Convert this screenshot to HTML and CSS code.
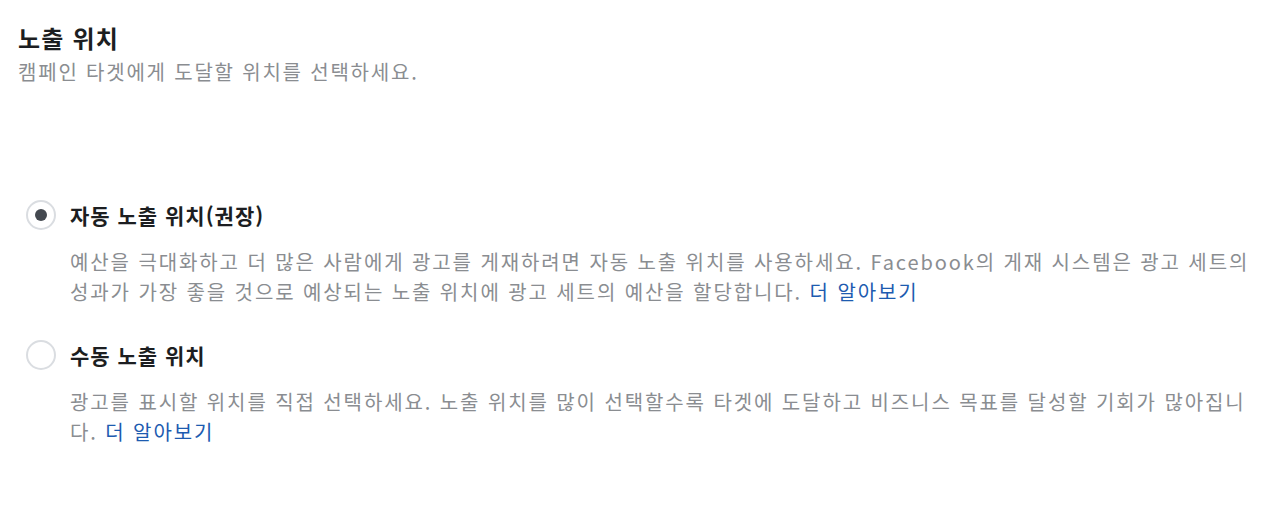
FILE: index.html
```html
<!DOCTYPE html>
<html lang="ko">
<head>
<meta charset="utf-8">
<link rel="stylesheet" href="styles.css">
</head>
<body>
<div class="page">
  <header class="head">
    <h1 class="title">노출 위치</h1>
    <p class="subtitle">캠페인 타겟에게 도달할 위치를 선택하세요.</p>
  </header>
  <div class="options">
    <div class="option">
      <div class="row">
        <span class="radio checked"><span class="dot"></span></span>
        <span class="label">자동 노출 위치(권장)</span>
      </div>
      <p class="desc">예산을 극대화하고 더 많은 사람에게 광고를 게재하려면 자동 노출 위치를 사용하세요. Facebook의 게재 시스템은 광고 세트의 성과가 가장 좋을 것으로 예상되는 노출 위치에 광고 세트의 예산을 할당합니다. <a class="link" href="#">더 알아보기</a></p>
    </div>
    <div class="option">
      <div class="row">
        <span class="radio"></span>
        <span class="label">수동 노출 위치</span>
      </div>
      <p class="desc">광고를 표시할 위치를 직접 선택하세요. 노출 위치를 많이 선택할수록 타겟에 도달하고 비즈니스 목표를 달성할 기회가 많아집니다. <a class="link" href="#">더 알아보기</a></p>
    </div>
  </div>
</div>
</body>
</html>
```
FILE: styles.css
```css
html, body {
  margin: 0;
  padding: 0;
  background: #ffffff;
}
body {
  font-family: "Noto Sans CJK KR", "Noto Sans", sans-serif;
  color: #1c1e21;
}
.page {
  width: 1262px;
  padding: 20px 0 0 18px;
}
.title {
  margin: 0;
  font-size: 24px;
  line-height: 36px;
  font-weight: 700;
  letter-spacing: 1.2px;
  color: #1c1e21;
}
.subtitle {
  margin: 0;
  font-size: 20px;
  line-height: 32px;
  letter-spacing: 1.8px;
  color: #8a8d91;
}
.options {
  padding-top: 112px;
  padding-left: 8px;
  display: flex;
  flex-direction: column;
  gap: 33px;
}
.row {
  display: flex;
  align-items: center;
  gap: 14px;
  height: 30px;
}
.radio {
  box-sizing: border-box;
  width: 30px;
  height: 30px;
  border: 2px solid #dadde1;
  border-radius: 50%;
  display: flex;
  align-items: center;
  justify-content: center;
  flex: none;
}
.dot {
  width: 12px;
  height: 12px;
  border-radius: 50%;
  background: #444950;
}
.label {
  font-size: 21px;
  font-weight: 700;
  letter-spacing: 1px;
  color: #1c1e21;
}
.desc {
  width: 1185px;
  margin: 17px 0 0 44px;
  font-size: 20px;
  line-height: 30px;
  letter-spacing: 1.9px;
  color: #8a8d91;
}
.link {
  color: #1d5bb0;
  text-decoration: none;
}
```
